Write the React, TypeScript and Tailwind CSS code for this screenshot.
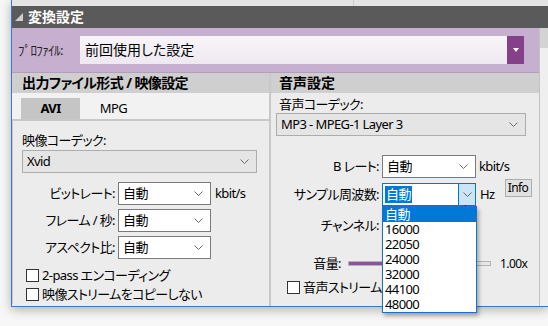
import React from "react";

const FONT =
  "font-['Noto_Sans','Noto_Sans_CJK_JP',sans-serif] [font-feature-settings:'palt'] tracking-[-0.6px]";

function Chevron() {
  return (
    <svg width="9" height="5" viewBox="0 0 9 5">
      <polyline
        points="0.5,0.5 4.5,4.5 8.5,0.5"
        fill="none"
        stroke="#6a6a6a"
        strokeWidth="1"
      />
    </svg>
  );
}

function Select({
  value,
  className,
}: {
  value: string;
  className: string;
}) {
  return (
    <div
      className={`flex h-[23px] items-center justify-between border pl-[4px] pr-[7px] text-[13px] leading-none ${className}`}
    >
      <span>{value}</span>
      <Chevron />
    </div>
  );
}

function Checkbox({ label }: { label: string }) {
  return (
    <div className="flex h-[19px] items-center gap-[3px] text-[13px] leading-none">
      <span className="h-[13px] w-[13px] border border-[#333] bg-white" />
      <span>{label}</span>
    </div>
  );
}

function LeftRow({
  label,
  unit,
}: {
  label: string;
  unit?: string;
}) {
  return (
    <div className="flex h-[23px] items-center text-[13px] leading-none">
      <span className="w-[103px] text-right">{label}</span>
      <Select value="自動" className="ml-[3px] w-[93px] border-[#7a7a7a] bg-white" />
      {unit ? <span className="ml-[4px]">{unit}</span> : null}
    </div>
  );
}

const RATES = ["自動", "16000", "22050", "24000", "32000", "44100", "48000"];

function Cursor() {
  return (
    <svg width="12" height="19" viewBox="0 0 12 19" className="absolute left-[83px] top-[22px]">
      <path
        d="M0.5 0.5 L0.5 15.5 L4 12 L6.5 17.8 L8.8 16.8 L6.4 11.3 L11.3 11.3 Z"
        fill="white"
        stroke="black"
        strokeWidth="1"
        strokeLinejoin="round"
      />
    </svg>
  );
}

function SampleSelect() {
  return (
    <div className="relative ml-[3px] w-[94px]">
      <div className="flex h-[23px] items-center border border-[#0078d7] bg-white text-[13px] leading-none">
        <span className="ml-[2px] bg-[#0078d7] px-[1px] py-[2px] text-white">自動</span>
        <span className="ml-auto flex h-full w-[17px] items-center justify-center border-l border-[#0078d7] bg-[#cce4f7]">
          <Chevron />
        </span>
      </div>
      <div className="absolute left-0 top-[23px] z-10 w-[95px] border border-[#1c6fcc] bg-white shadow-[2px_3px_4px_rgba(0,0,0,0.3)]">
        {RATES.map((r, i) => (
          <div
            key={r}
            className={`flex h-[15px] items-center pl-[2px] text-[13px] leading-none ${
              i === 0 ? "bg-[#0078d7] text-white" : "text-black"
            }`}
          >
            {r}
          </div>
        ))}
      </div>
      <Cursor />
    </div>
  );
}

export default function App() {
  return (
    <div className={`h-[326px] w-[548px] overflow-hidden bg-[#f7f7f7] pl-[11px] text-black ${FONT}`}>
      <div className="relative flex h-[307px] w-[537px] flex-col border-b border-l border-[#2f7bd0] bg-[#ececec] shadow-[0_3px_10px_rgba(0,0,0,0.28)]">
        {/* top strip */}
        <div className="flex h-[6px] bg-[#e4e4e4]">
          <div className="w-[341px]" />
          <div className="w-px bg-[#cdcdcd]" />
        </div>

        {/* title bar */}
        <div className="flex h-[22px] items-center bg-[#5a5a5a] pl-[3px]">
          <svg width="8" height="8" viewBox="0 0 8 8">
            <polygon points="8,0 8,8 0,8" fill="#cfcfcf" />
          </svg>
          <span className="ml-[5px] text-[14px] font-bold leading-none tracking-[0px] text-white">変換設定</span>
        </div>

        <div className="flex flex-1">
          <div className="flex w-[527px] flex-col">
            {/* profile */}
            <div className="flex h-[45px] items-center border-b border-[#b59dbd] bg-[#c7afcf] pl-[6px]">
              <span className="w-[62px] text-[13px] leading-none text-[#222]">ﾌﾟﾛﾌｧｲﾙ:</span>
              <div className="flex h-[28px] w-[427px] items-center bg-gradient-to-b from-[#f8f5f9] to-[#eee8f0] pl-[5px] text-[14px] leading-none tracking-[0px]">
                前回使用した設定
              </div>
              <div className="flex h-[28px] w-[17px] items-center justify-center bg-[#84418a]">
                <svg width="6" height="4" viewBox="0 0 6 4">
                  <polygon points="0,0 6,0 3,4" fill="white" />
                </svg>
              </div>
            </div>

            {/* sections */}
            <div className="flex flex-1">
              {/* left */}
              <div className="flex w-[257px] flex-col">
                <div className="flex h-[20px] items-center bg-[#cfcfcf] pl-[10px] text-[14px] font-bold leading-none">
                  出力ファイル形式 / 映像設定
                </div>
                <div className="flex h-[28px] items-end border-b-2 border-[#c8c8c8] bg-[#f2f2f2] pl-[9px]">
                  <div className="flex h-[21px] w-[59px] items-center justify-center bg-[#c5c5c5] text-[13px] font-bold leading-none">
                    AVI
                  </div>
                  <div className="ml-[4px] flex h-[21px] w-[59px] items-center justify-center text-[13px] leading-none">
                    MPG
                  </div>
                </div>
                <div className="flex flex-col border-l border-[#c9c9c9] pl-[9px]">
                  <div className="mt-[11px] h-[16px] text-[13px] leading-[16px]">映像コーデック:</div>
                  <Select value="Xvid" className="mt-[2px] w-[235px] border-[#adadad] bg-[#e5e5e5]" />
                  <div className="-ml-[10px] mt-[9px] flex flex-col gap-[4px]">
                    <LeftRow label="ビットレート:" unit="kbit/s" />
                    <LeftRow label="フレーム / 秒:" />
                    <LeftRow label="アスペクト比:" />
                  </div>
                  <div className="mt-[7px] pl-[4px]">
                    <Checkbox label="2-pass エンコーディング" />
                    <Checkbox label="映像ストリームをコピーしない" />
                  </div>
                </div>
              </div>

              <div className="w-[2px] bg-[#c8c8c8]" />

              {/* right */}
              <div className="flex flex-1 flex-col">
                <div className="flex h-[20px] items-center bg-[#cfcfcf] pl-[8px] text-[14px] font-bold leading-none tracking-[0px]">
                  音声設定
                </div>
                <div className="mt-[3px] h-[16px] pl-[8px] text-[13px] leading-[16px]">音声コーデック:</div>
                <Select
                  value="MP3 - MPEG-1 Layer 3"
                  className="ml-[5px] mt-[1px] w-[250px] border-[#adadad] bg-[#e5e5e5]"
                />
                <div className="mt-[19px] flex h-[23px] items-center text-[13px] leading-none">
                  <span className="w-[108px] text-right">B レート:</span>
                  <Select value="自動" className="ml-[3px] w-[94px] border-[#7a7a7a] bg-white" />
                  <span className="ml-[3px]">kbit/s</span>
                </div>
                <div className="mt-[5px] flex h-[23px] items-center text-[13px] leading-none">
                  <span className="w-[108px] text-right">サンプル周波数:</span>
                  <SampleSelect />
                  <span className="ml-[4px]">Hz</span>
                  <div className="mb-[13px] ml-[10px] flex h-[18px] w-[27px] items-center justify-center border border-[#adadad] bg-[#e1e1e1] text-[12px] leading-none">
                    Info
                  </div>
                </div>
                <div className="mt-[8px] flex h-[23px] items-center text-[13px] leading-none">
                  <span className="w-[108px] text-right">チャンネル:</span>
                  <Select value="" className="ml-[3px] w-[94px] border-[#7a7a7a] bg-white" />
                </div>
                <div className="mt-[15px] flex h-[23px] items-center text-[13px] leading-none">
                  <span className="w-[70px] text-right">音量:</span>
                  <div className="ml-[7px] flex h-[5px] w-[143px] border border-[#b4b4b4] bg-[#e7e7e7]">
                    <div className="h-full w-[90px] bg-[#8e4f9f]" />
                  </div>
                  <span className="ml-[9px] text-[12px]">1.00x</span>
                </div>
                <div className="mt-[3px] pl-[16px]">
                  <Checkbox label="音声ストリームをコピーしない" />
                </div>
              </div>
            </div>
          </div>

          {/* right scroll strip */}
          <div className="flex w-[9px] flex-col border-l border-[#c2c2c2] bg-[#efefef]">
            <div className="h-[20px] bg-[#d3d3d3]" />
          </div>
        </div>
      </div>
    </div>
  );
}
